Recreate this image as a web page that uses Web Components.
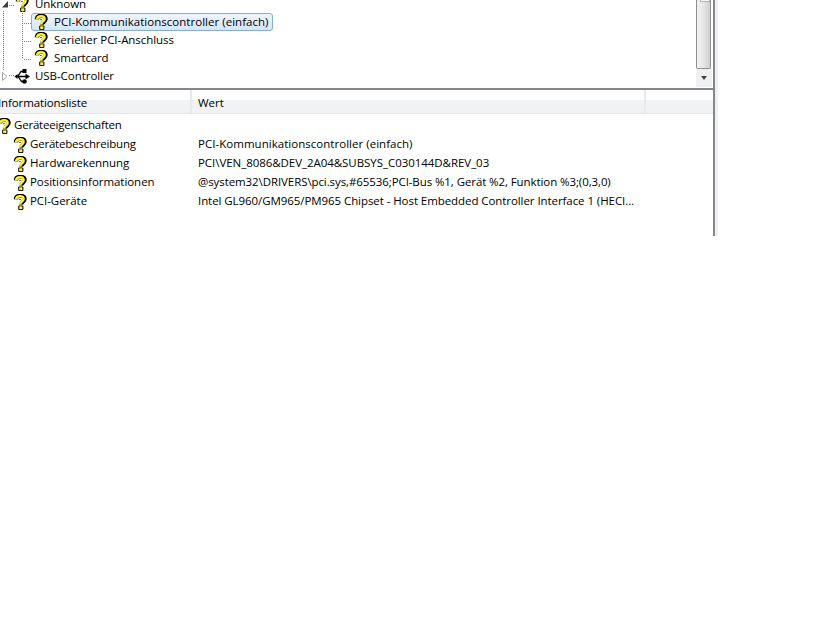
<!DOCTYPE html>
<html><head><meta charset="utf-8"><style>
html,body{margin:0;background:#fff}
body{font:11.5px/16px "Open Sans","Noto Sans",sans-serif;letter-spacing:-.05px;color:#000;height:630px;overflow:hidden}
</style></head><body>
<dm-window>
  <tree-pane>
    <tree-row level="0" arrow="open" icon="q">Unknown</tree-row>
    <tree-row level="1" icon="q" selected style="letter-spacing:.03px">PCI-Kommunikationscontroller (einfach)</tree-row>
    <tree-row level="1" icon="q">Serieller PCI-Anschluss</tree-row>
    <tree-row level="1" icon="q" style="letter-spacing:-.15px">Smartcard</tree-row>
    <tree-row level="0" arrow="closed" icon="usb">USB-Controller</tree-row>
  </tree-pane>
  <list-pane>
    <prop-row level="0" name="Geräteeigenschaften" style="letter-spacing:-.2px"></prop-row>
    <prop-row level="1" name="Gerätebeschreibung" style="letter-spacing:-.2px"><span style="letter-spacing:.03px">PCI-Kommunikationscontroller (einfach)</span></prop-row>
    <prop-row level="1" name="Hardwarekennung">PCI\VEN_8086&amp;DEV_2A04&amp;SUBSYS_C030144D&amp;REV_03</prop-row>
    <prop-row level="1" name="Positionsinformationen"><span style="letter-spacing:-.09px">@system32\DRIVERS\pci.sys,#65536;PCI-Bus %1, Gerät %2, Funktion %3;(0,3,0)</span></prop-row>
    <prop-row level="1" name="PCI-Geräte"><span style="letter-spacing:-.07px">Intel GL960/GM965/PM965 Chipset - Host Embedded Controller Interface 1 (HECI...</span></prop-row>
  </list-pane>
</dm-window>
<script>
const Q=`<svg width="16" height="16" viewBox="0 0 16 16" style="display:block;flex:none"><path d="M3.800 5.400C3.900 2.800 6 1.700 8.200 1.700c2.700 0 4.500 1.300 4.500 3.400 0 2.700-3.500 2.700-3.700 5.500" fill="none" stroke="#000" stroke-width="4"/><rect x="6.200" y="11.400" width="5.200" height="4.600" rx="1" fill="#000"/><path d="M4 5.400C4.200 3.300 6 2.300 8.200 2.300c2.100 0 3.400 1 3.400 2.700 0 2.200-3.400 2.600-3.600 5.400" fill="none" stroke="#fff02a" stroke-width="2.500"/><rect x="7.200" y="12.300" width="3.200" height="2.800" fill="#fff02a"/><path d="M7.200 5.500h1.600" stroke="#7a2a6a" stroke-width="1"/></svg>`;
const USB=`<svg width="16" height="16" viewBox="0 0 16 16" style="display:block;flex:none"><g fill="#000" stroke="#000"><path d="M.5 8.500L3.500 6v5z" stroke="none"/><path d="M2 8.500h11" stroke-width="1.600" fill="none"/><path d="M11.500 5.500l4.500 3-4.500 3z" stroke="none"/><path d="M4 8L7 3.500h3M4.500 9L7.500 13.500h2" fill="none" stroke-width="1.300"/><rect x="8.500" y="1" width="4" height="4" stroke="none"/><circle cx="10.500" cy="13.500" r="2.300" stroke="none"/></g></svg>`;
function def(name,html,init){customElements.define(name,class extends HTMLElement{constructor(){super();this.attachShadow({mode:'open'}).innerHTML=html;}connectedCallback(){init&&init.call(this,this.shadowRoot);}});}
def('dm-window',`<style>
:host{display:flex;width:718px;height:236px;background:#fff;overflow:hidden}
.main{width:713px;display:flex;flex-direction:column;flex:none}
.b1{width:2px;background:#828790;flex:none}.b2{width:3px;background:#f0f0f0;flex:none}
</style><div class="main"><slot></slot></div><div class="b1"></div><div class="b2"></div>`);
def('tree-pane',`<style>
:host{display:flex;height:88px;border-bottom:2px solid #828790;overflow:hidden;position:relative;flex:none}
.rows{flex:1;min-width:0;margin-top:-5px}
svg.lines{position:absolute;left:0;top:0;pointer-events:none}
</style><div class="rows"><slot></slot></div>
<svg class="lines" width="40" height="88"><path d="M3.500 11V71M22.500 11V59M24 23.500H32M24 41.500H32M24 59.500H32M9 5.500H15M9 75.500H14" stroke="#808080" stroke-dasharray="1 1" fill="none"/></svg>
<scroll-bar></scroll-bar>`);
def('scroll-bar',`<style>
:host{display:flex;flex-direction:column;width:16px;height:87px;margin:0 1px 0 0;flex:none}
.thumb{height:69px;box-sizing:border-box;width:15px;border:1px solid #8f8f8f;border-top:0;border-radius:0 0 2px 2px;background:linear-gradient(90deg,#f2f2f2,#e6e6e6 50%,#cfcfcf)}
.grip{width:8px;height:1px;margin-left:3px;background:#f6f6f6;border:1px solid #b5b5b5;border-top:0}
.btn{flex:1;background:#f0f0f0;display:flex;align-items:center;justify-content:center}
.arr{width:0;height:0;border:3.500px solid transparent;border-top:4px solid #444;border-bottom:0}
</style><div class="thumb"><div class="grip"></div></div><div class="btn"><div class="arr"></div></div>`);
def('tree-row',`<style>
:host{display:block;height:18px}
.r{display:flex;height:18px;align-items:center;box-sizing:border-box}
.box{display:flex;align-items:center;height:18px;box-sizing:border-box;border:1px solid transparent;border-radius:3px;white-space:nowrap}
:host([level="0"]) .r{padding-left:13px}
:host([level="1"]) .r{padding-left:31px}
:host([level="0"]) .ic{margin-right:5px}
:host([level="1"]) .ic{margin:0 5px 0 1px}
:host([level="1"]) .box{padding-right:3px}
:host([selected]) .box{border-color:#84acdd;background:linear-gradient(#eef5fd,#d6e6fb)}
.arr{position:absolute;left:2px}
</style><div class="r"><span class="arr"></span><div class="box"><span class="ic"></span><slot></slot></div></div>`,function(s){
 s.querySelector('.ic').innerHTML=this.getAttribute('icon')=='usb'?USB:Q;
 const a=this.getAttribute('arrow'),e=s.querySelector('.arr');
 if(a=='open')e.innerHTML='<svg width="7" height="7" style="display:block"><path d="M0 6.500H6V0z" fill="#404040"/></svg>';
 if(a=='closed')e.innerHTML='<svg width="7" height="9" style="display:block"><path d="M.5.5L5 4.500.5 8.500z" fill="#fff" stroke="#a6a6a6"/></svg>';
});
def('list-pane',`<style>
:host{display:block;flex:1;overflow:hidden}
.h{display:grid;grid-template-columns:192px 454px 1fr;height:24px;background:linear-gradient(#fff 0,#fff 10px,#f1f2f4 10px,#f1f2f4 23px,#e4e6e9 23px)}
.h div{box-sizing:border-box;padding-left:6px;line-height:26px;border-right:2px solid #e8e9ec;white-space:nowrap;overflow:hidden;height:23px}
.h div:first-child{padding-left:0;text-indent:-2px;letter-spacing:-.12px}
.h div:last-child{border:0}
.b{padding-top:2px}
</style><div class="h"><div>Informationsliste</div><div>Wert</div><div></div></div><div class="b"><slot></slot></div>`);
def('prop-row',`<style>
:host{display:grid;grid-template-columns:191px 1fr;height:19px;align-items:center;white-space:nowrap}
.n{display:flex;align-items:center;gap:2px}
.n span:last-child,.v{position:relative;top:-1px}
:host([level="0"]) .n{margin-left:-4px}
:host([level="1"]) .n{padding-left:12px}
.v{padding-left:7px}
</style><div class="n"><span id="i"></span><span id="t"></span></div><div class="v"><slot></slot></div>`,function(s){
 s.getElementById('i').innerHTML=Q;s.getElementById('t').textContent=this.getAttribute('name');
});
</script>
</body></html>
